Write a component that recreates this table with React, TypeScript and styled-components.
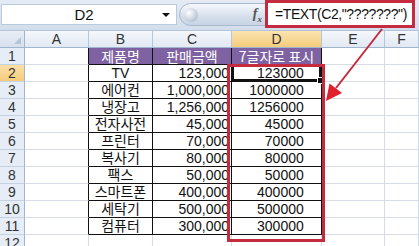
import styled, { createGlobalStyle } from "styled-components";

type Row = {
  name: string;
  price: string;
  text: string;
};

const rows: Row[] = [
  { name: "TV", price: "123,000", text: "123000" },
  { name: "에어컨", price: "1,000,000", text: "1000000" },
  { name: "냉장고", price: "1,256,000", text: "1256000" },
  { name: "전자사전", price: "45,000", text: "45000" },
  { name: "프린터", price: "70,000", text: "70000" },
  { name: "복사기", price: "80,000", text: "80000" },
  { name: "팩스", price: "50,000", text: "50000" },
  { name: "스마트폰", price: "400,000", text: "400000" },
  { name: "세탁기", price: "500,000", text: "500000" },
  { name: "컴퓨터", price: "300,000", text: "300000" },
];

const columns = ["A", "B", "C", "D", "E", "F"];

export default function App(): JSX.Element {
  return (
    <Page>
      <GlobalStyle />
      <FormulaBar>
        <NameBox>
          <NameText>D2</NameText>
          <DropArrow />
        </NameBox>
        <FxPill>
          <Knob />
          <Fx>
            f<sub>x</sub>
          </Fx>
        </FxPill>
        <FormulaInput>=TEXT(C2,"???????")</FormulaInput>
      </FormulaBar>

      <Sheet>
        <Corner />
        {columns.map((c) => (
          <ColHead key={c} selected={c === "D"}>
            {c}
          </ColHead>
        ))}

        <RowHead>1</RowHead>
        <Cell edge />
        <TitleCell>제품명</TitleCell>
        <TitleCell>판매금액</TitleCell>
        <TitleCell>7글자로 표시</TitleCell>
        <Cell />
        <Cell />

        {rows.map((r, i) => (
          <Line key={r.name}>
            <RowHead selected={i === 0}>{i + 2}</RowHead>
            <Cell edge />
            <DataCell align="center">{r.name}</DataCell>
            <DataCell align="right">{r.price}</DataCell>
            <DataCell align="center" active={i === 0}>
              <Padded>{r.text}</Padded>
              {i === 0 && <FillHandle />}
            </DataCell>
            <Cell />
            <Cell />
          </Line>
        ))}

        <RowHead>12</RowHead>
        <Cell />
        <Cell />
        <Cell />
        <Cell />
        <Cell />
        <Cell />

        <RedBox />
      </Sheet>

      <Arrow width="419" height="246" viewBox="0 0 419 246">
        <line x1="382" y1="29" x2="336" y2="88" stroke="#c42b3f" strokeWidth="2" />
        <polygon points="326,101 342,93 329.5,83.5" fill="#e0202c" />
      </Arrow>
    </Page>
  );
}

const GlobalStyle = createGlobalStyle`
  body {
    margin: 0;
    background: #ffffff;
    overflow: hidden;
  }
`;

const Page = styled.div`
  position: relative;
  width: 419px;
  height: 246px;
  overflow: hidden;
  font-family: "Liberation Sans", "Noto Sans CJK KR", sans-serif;
`;

const FormulaBar = styled.div`
  height: 31px;
  box-sizing: border-box;
  display: flex;
  align-items: flex-start;
  background: linear-gradient(#e4ebf5, #d3deec);
  border-bottom: 1px solid #b4c4d8;
`;

const NameBox = styled.div`
  margin: 4px 0 0 1px;
  width: 176px;
  height: 21px;
  box-sizing: border-box;
  background: #ffffff;
  border: 1px solid #bccbdc;
  display: flex;
  align-items: center;
`;

const NameText = styled.span`
  flex: 1;
  text-align: center;
  font-size: 15px;
  color: #111;
  padding-left: 4px;
`;

const DropArrow = styled.span`
  width: 0;
  height: 0;
  margin-right: 6px;
  border-left: 4px solid transparent;
  border-right: 4px solid transparent;
  border-top: 4px solid #111;
`;

const FxPill = styled.div`
  margin: 3px -6px 0 2px;
  width: 92px;
  height: 23px;
  box-sizing: border-box;
  border: 1px solid #a7b8cd;
  border-radius: 12px 0 0 12px;
  background: linear-gradient(#f5f8fc, #d5dfeb 60%, #c8d4e3);
  display: flex;
  align-items: center;
  justify-content: space-between;
  padding: 0 8px 0 4px;
`;

const Knob = styled.span`
  width: 14px;
  height: 14px;
  border-radius: 50%;
  background: radial-gradient(circle at 35% 35%, #ffffff, #b9c6d6 70%, #9aa9bc);
`;

const Fx = styled.span`
  font-family: "Liberation Serif", serif;
  font-style: italic;
  font-weight: bold;
  font-size: 14px;
  color: #555;
  sub {
    font-size: 9px;
  }
`;

const FormulaInput = styled.div`
  width: 150px;
  height: 28px;
  box-sizing: border-box;
  background: #ffffff;
  border: 3px solid #c42b3f;
  font-size: 14px;
  letter-spacing: -0.4px;
  color: #111;
  display: flex;
  align-items: center;
  padding-left: 7px;
  white-space: nowrap;
`;

const Sheet = styled.div`
  position: relative;
  display: grid;
  grid-template-columns: 25px 64px 64px 79px 90px 63px 1fr;
  grid-auto-rows: 17px;
`;

const Line = styled.div`
  display: contents;
`;

const Corner = styled.div`
  box-sizing: border-box;
  background: linear-gradient(#e9eef6, #d6e0ed);
  border-right: 1px solid #9eb6ce;
  border-bottom: 1px solid #9eb6ce;
  position: relative;
  &::after {
    content: "";
    position: absolute;
    right: 3px;
    bottom: 3px;
    border-left: 7px solid transparent;
    border-bottom: 7px solid #b4c3d6;
  }
`;

const ColHead = styled.div<{ selected?: boolean }>`
  box-sizing: border-box;
  background: ${(p) =>
    p.selected
      ? "linear-gradient(#fbe3b0, #f6cc7c)"
      : "linear-gradient(#f4f7fb, #e2e9f3)"};
  border-right: 1px solid #b5c6da;
  border-bottom: 1px solid #9eb6ce;
  text-align: center;
  font-size: 14px;
  line-height: 16px;
  color: #333;
`;

const RowHead = styled.div<{ selected?: boolean }>`
  box-sizing: border-box;
  background: ${(p) =>
    p.selected ? "linear-gradient(#fbe0a8, #f6cc7c)" : "#e6edf6"};
  border-right: 1px solid #9eb6ce;
  border-bottom: 1px solid #c5d2e1;
  text-align: center;
  font-size: 14px;
  line-height: 16px;
  color: #333;
`;

const Cell = styled.div<{ edge?: boolean }>`
  box-sizing: border-box;
  border-right: 1px solid ${(p) => (p.edge ? "#111" : "#d6dce5")};
  border-bottom: 1px solid #d6dce5;
`;

const TitleCell = styled.div`
  box-sizing: border-box;
  background: #7f62a1;
  color: #ffffff;
  border-right: 1px solid #111;
  border-bottom: 1px solid #111;
  font-family: "Noto Sans CJK KR", sans-serif;
  font-size: 14px;
  line-height: 16px;
  text-align: center;
  white-space: nowrap;
`;

const DataCell = styled.div<{ align: "center" | "right"; active?: boolean }>`
  position: relative;
  box-sizing: border-box;
  border-right: 1px solid #111;
  border-bottom: 1px solid #111;
  font-family: "Liberation Sans", "Noto Sans CJK KR", sans-serif;
  font-size: 14px;
  line-height: 16px;
  color: #111;
  text-align: ${(p) => p.align};
  padding-right: ${(p) => (p.align === "right" ? "2px" : "0")};
  white-space: nowrap;
  box-shadow: ${(p) =>
    p.active ? "inset 0 0 0 2px #111, inset 0 0 0 3px #fff" : "none"};
`;

const Padded = styled.span`
  display: inline-block;
  width: 7ch;
  text-align: right;
`;

const FillHandle = styled.span`
  position: absolute;
  right: -3px;
  bottom: -3px;
  width: 5px;
  height: 5px;
  background: #111;
  border: 1px solid #fff;
  z-index: 2;
`;

const RedBox = styled.div`
  position: absolute;
  left: 227px;
  top: 33px;
  width: 98px;
  height: 178px;
  box-sizing: border-box;
  border: 3px solid #c42b3f;
  pointer-events: none;
  z-index: 3;
`;

const Arrow = styled.svg`
  position: absolute;
  left: 0;
  top: 0;
  pointer-events: none;
  z-index: 4;
`;
